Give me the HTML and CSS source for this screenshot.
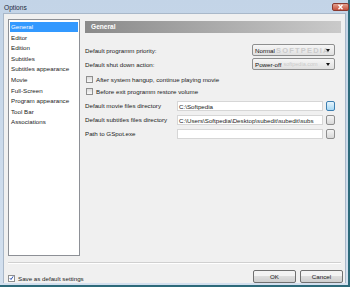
FILE: index.html
```html
<!DOCTYPE html>
<html lang="en">
<head>
  <meta charset="UTF-8">
  <title>Options</title>
  <link rel="stylesheet" href="styles.css">
</head>
<body>
  <div class="window">
    <div class="titlebar">
      <span class="title">Options</span>
      <span class="close">
        <svg width="9" height="6" viewBox="0 0 9 6"><path d="M2.5 0.8 L6.5 5.2 M6.5 0.8 L2.5 5.2" stroke="#fff" stroke-width="1.3"/></svg>
      </span>
    </div>

    <div class="client">
      <div class="main">
        <ul class="pages">
          <li class="selected">General</li>
          <li>Editor</li>
          <li>Edition</li>
          <li>Subtitles</li>
          <li>Subtitles appearance</li>
          <li>Movie</li>
          <li>Full-Screen</li>
          <li>Program appearance</li>
          <li>Tool Bar</li>
          <li>Associations</li>
        </ul>

        <div class="panel">
          <div class="panel-head">General</div>

          <div class="row first">
            <span>Default programm priority:</span>
            <div class="combo"><span>Normal</span><span class="mark">SOFTPEDIA</span><i class="arrow"></i></div>
          </div>
          <div class="row">
            <span>Default shut down action:</span>
            <div class="combo"><span>Power-off</span><span class="mark small">softpedia.com</span><i class="arrow"></i></div>
          </div>

          <label class="check-row"><span class="box"></span>After system hangup, continue playing movie</label>
          <label class="check-row"><span class="box"></span>Before exit programm restore volume</label>

          <div class="dir-row first-dir">
            <span class="dir-label">Default movie files directory</span>
            <div class="field">C:\Softpedia</div>
            <span class="browse active"></span>
          </div>
          <div class="dir-row">
            <span class="dir-label">Default subtitles files directory</span>
            <div class="field">C:\Users\Softpedia\Desktop\subedit\subedit\subs</div>
            <span class="browse"></span>
          </div>
          <div class="dir-row">
            <span class="dir-label">Path to GSpot.exe</span>
            <div class="field"></div>
            <span class="browse"></span>
          </div>
        </div>
      </div>

      <div class="separator"></div>

      <div class="footer">
        <label class="save">
          <span class="box checked">
            <svg width="6" height="6" viewBox="0 0 6 6"><path d="M1 3.2 L2.4 4.8 L5 1" stroke="#2a4fb0" stroke-width="1.2" fill="none"/></svg>
          </span>
          Save as default settings
        </label>
        <div class="buttons">
          <button>OK</button>
          <button>Cancel</button>
        </div>
      </div>
    </div>
  </div>
</body>
</html>
```

FILE: styles.css
```css
body {
  margin: 0;
  font-family: "Liberation Sans", Arial, sans-serif;
  font-size: 6.2px;
  color: #222;
}
.window {
  box-sizing: border-box;
  width: 350px;
  height: 287px;
  display: flex;
  flex-direction: column;
  background: linear-gradient(#c3d4e7, #d3e0ef);
  border-right: 2px solid #2d6a7a;
  border-bottom: 2px solid #2d6a7a;
  padding: 0 2px 2px 3px;
}
.titlebar {
  height: 13px;
  display: flex;
  justify-content: space-between;
  align-items: flex-start;
}
.title {
  font-size: 6.6px;
  margin: 4px 0 0 1px;
  color: #1d2a3a;
}
.close {
  width: 17px;
  height: 8px;
  margin: 3px -3px 0 0;
  border-radius: 2px;
  border: 1px solid #8a3a30;
  background: linear-gradient(#e4a08e, #c6503c);
  display: flex;
  align-items: center;
  justify-content: center;
  box-sizing: border-box;
}
.client {
  flex: 1;
  background: #f0f0f0;
  padding: 5px 2px 0 4px;
  display: flex;
  flex-direction: column;
  border: 1px solid #a9b8c9;
  border-bottom: none;
}
.main {
  display: flex;
  gap: 5px;
  height: 237px;
}
.pages {
  box-sizing: border-box;
  width: 72px;
  margin: 0;
  padding: 2px 1px;
  list-style: none;
  background: #fff;
  border: 1px solid #8d9096;
}
.pages li {
  height: 10.6px;
  line-height: 10px;
  padding-left: 1px;
  white-space: nowrap;
}
.pages li.selected {
  background: #3399ff;
  color: #fff;
  height: 10px;
  margin-bottom: 0.6px;
}
.panel {
  flex: 1;
  padding-top: 2px;
  padding-right: 2px;
}
.panel-head {
  height: 12px;
  line-height: 12px;
  padding-left: 6px;
  color: #fff;
  font-weight: bold;
  font-size: 6.6px;
  background: linear-gradient(to right, #8a8a8a, #cacaca);
}
.row {
  display: flex;
  justify-content: space-between;
  align-items: center;
  height: 12px;
  margin-top: 2px;
  padding-right: 6px;
}
.row.first {
  margin-top: 11px;
}
.combo {
  position: relative;
  box-sizing: border-box;
  width: 83px;
  height: 12px;
  border: 1px solid #8e8f8f;
  border-radius: 2px;
  background: linear-gradient(#f6f6f6, #e0e0e0);
  display: flex;
  align-items: center;
  padding-left: 2px;
  color: #111;
  overflow: hidden;
}
.mark {
  color: #cbcbcb;
  font-weight: bold;
  font-size: 7.5px;
  letter-spacing: 1.2px;
  margin-left: 1px;
  white-space: nowrap;
}
.mark.small {
  font-weight: normal;
  letter-spacing: 0;
  font-size: 5.5px;
  margin-left: 2px;
}
.arrow {
  position: absolute;
  right: 4px;
  top: 4px;
  border-left: 2.5px solid transparent;
  border-right: 2.5px solid transparent;
  border-top: 3px solid #111;
}
.check-row {
  display: flex;
  align-items: center;
  height: 12px;
  padding-left: 1px;
}
.check-row:first-of-type {
  margin-top: 3px;
}
.box {
  box-sizing: border-box;
  width: 7px;
  height: 7px;
  border: 1px solid #8f8f8f;
  background: linear-gradient(#dcdcdc, #f8f8f8);
  margin-right: 3px;
  display: inline-flex;
  align-items: center;
  justify-content: center;
}
.dir-row {
  display: flex;
  align-items: center;
  height: 11px;
  margin-top: 3px;
  padding-right: 6px;
}
.dir-row.first-dir {
  margin-top: 3px;
}
.dir-label {
  width: 92px;
  white-space: nowrap;
}
.field {
  box-sizing: border-box;
  flex: 1;
  height: 10px;
  line-height: 9px;
  padding-left: 1px;
  background: #fff;
  border: 1px solid #d6d6d6;
  white-space: nowrap;
  overflow: hidden;
}
.browse {
  box-sizing: border-box;
  width: 9px;
  height: 10px;
  margin-left: 3px;
  border: 1px solid #8e8e8e;
  border-radius: 2px;
  background: linear-gradient(#f4f4f4, #d8d8d8);
}
.browse.active {
  border-color: #3c7fb1;
  background: linear-gradient(#e6f4fc, #a8d8f4);
}
.separator {
  height: 1px;
  margin: 6px 2px 0 0;
  background: #d0d0d0;
  border-bottom: 1px solid #fff;
}
.footer {
  display: flex;
  justify-content: space-between;
  align-items: center;
  margin-top: 6px;
}
.save {
  display: flex;
  align-items: center;
  margin-top: 3px;
}
.save .box {
  background: #fff;
}
.buttons {
  display: flex;
  gap: 4px;
}
.buttons button {
  box-sizing: border-box;
  width: 43px;
  height: 13px;
  padding: 0;
  font-family: inherit;
  font-size: 6.2px;
  color: #222;
  border: 1px solid #707070;
  border-radius: 2px;
  background: linear-gradient(#f3f3f3 50%, #dddddd 50%, #cfcfcf);
}
```
